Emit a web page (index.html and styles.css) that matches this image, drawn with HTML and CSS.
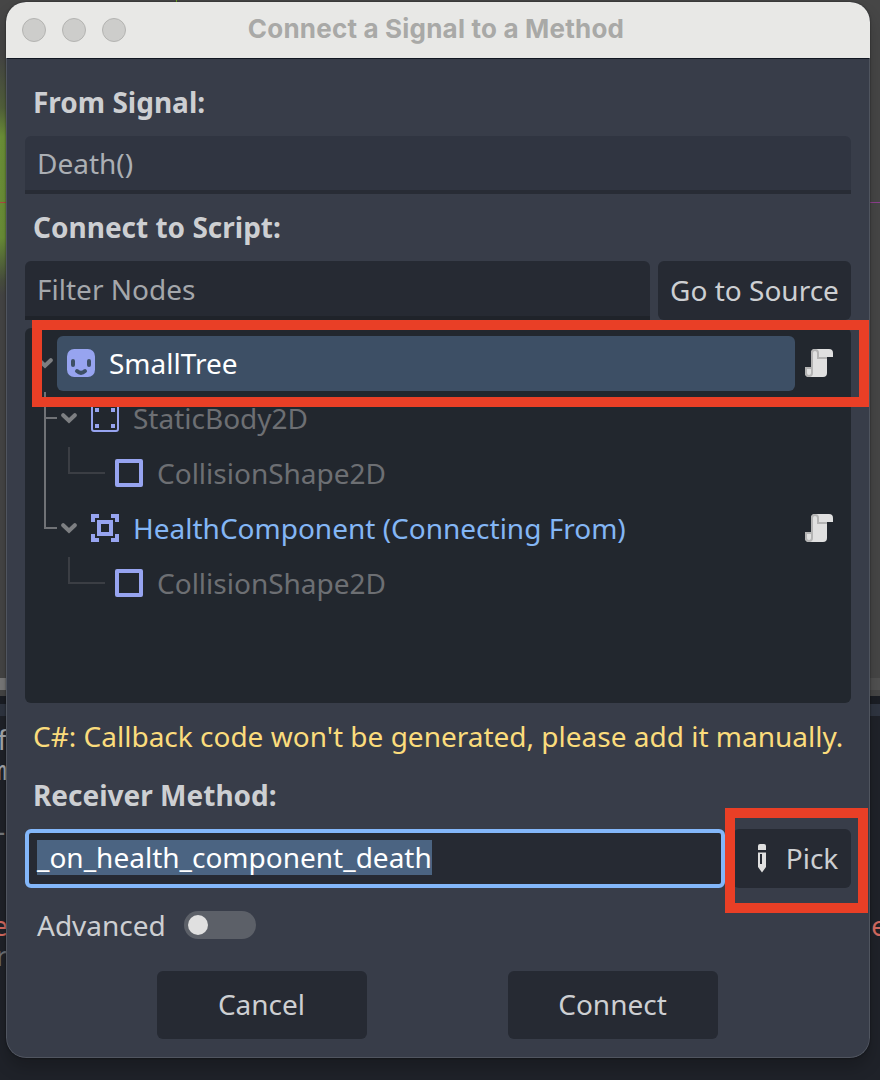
FILE: index.html
```html
<!DOCTYPE html>
<html lang="en">
<head>
<meta charset="utf-8">
<title>Connect a Signal to a Method</title>
<link rel="stylesheet" href="styles.css">
</head>
<body>
<svg class="defs" width="0" height="0">
  <symbol id="script" viewBox="0 0 16 16"><path fill="#e0e0e0" d="M6 1h7a2 2 0 0 1 2 2v2h-3v8a2 2 0 0 1-2 2H3a2 2 0 0 1-2-2v-3h3V3a2 2 0 0 1 2-2z"/><path fill="#b4b4b4" fill-rule="evenodd" d="M6 1a2 2 0 0 0-2 2v7H1v3a2 2 0 0 0 4 0V3a1 1 0 0 1 2 0v3h5V5H8V3a2 2 0 0 0-2-2zM2 11h2v2a1 1 0 0 1-2 0z"/></symbol>
  <symbol id="shape" viewBox="0 0 16 16"><rect x="2" y="2" width="12" height="12" fill="none" stroke="#97a4f0" stroke-width="2" stroke-linejoin="round"/></symbol>
  <symbol id="chevron" viewBox="0 0 16 12"><path d="M2.2 3.2 8 8.8l5.800-5.600" fill="none" stroke="#7d7f82" stroke-width="4" stroke-linecap="round"/></symbol>
</svg>
<div class="editor">
  <div class="viewport"><div class="foliage"></div><div class="axis"></div><div class="scrollbar"></div></div>
  <div class="split"></div>
  <div class="panel"></div>
  <span class="peek peek-f">f</span>
  <span class="peek peek-m">m</span>
  <span class="peek peek-dash">-</span>
  <span class="peek peek-e">e</span>
  <span class="peek peek-r">r</span>
  <span class="peek peek-right">e</span>
</div>
<main class="dialog">
  <header class="titlebar">
    <div class="lights"><i></i><i></i><i></i></div>
    <h1>Connect a Signal to a Method</h1>
  </header>
  <div class="content">
    <h2 class="label label-signal">From Signal:</h2>
    <div class="field readonly">Death()</div>
    <h2 class="label label-script">Connect to Script:</h2>
    <div class="row">
      <div class="field filter">Filter Nodes</div>
      <div class="button source">Go to Source</div>
    </div>
    <div class="tree">
      <svg class="guides" width="90" height="260" viewBox="0 0 90 260" fill="none" stroke-width="2">
        <path stroke="#707276" d="M20 64v136h12M20 90h12"/>
        <path stroke="#3b3e44" d="M44 119v26h36M44 229v26h36"/>
      </svg>
      <div class="node level0">
        <svg class="chevron"><use href="#chevron"/></svg>
        <div class="selected">
          <svg class="icon" viewBox="0 0 16 16"><rect x="1" y="1" width="14" height="14" rx="3.600" fill="#97a4f0"/><path d="M4 7v2M12 7v2M6 12q2 1.800 4 0" fill="none" stroke="#3d4f65" stroke-width="2" stroke-linecap="round"/></svg>
          <span>SmallTree</span>
        </div>
        <svg class="icon script"><use href="#script"/></svg>
      </div>
      <div class="node level1 dim">
        <svg class="chevron"><use href="#chevron"/></svg>
        <svg class="icon" viewBox="0 0 16 16" fill="#97a4f0"><rect x="1.500" y="1.500" width="13" height="13" rx="1" fill="none" stroke="#97a4f0"/><path d="M3 3h2v2H3zM11 3h2v2h-2zM3 11h2v2H3zM11 11h2v2h-2z"/></svg>
        <span>StaticBody2D</span>
      </div>
      <div class="node level2 dim">
        <svg class="icon"><use href="#shape"/></svg>
        <span>CollisionShape2D</span>
      </div>
      <div class="node level1 origin">
        <svg class="chevron"><use href="#chevron"/></svg>
        <svg class="icon" viewBox="0 0 16 16" fill="#97a4f0"><path d="M1 1h4v2H3v2H1zM11 1h4v4h-2V3h-2zM1 11h2v2h2v2H1zM13 11h2v4h-4v-2h2z"/><path fill-rule="evenodd" d="M4 4h8v8H4zM6 6v4h4V6z"/></svg>
        <span>HealthComponent (Connecting From)</span>
        <svg class="icon script"><use href="#script"/></svg>
      </div>
      <div class="node level2 dim">
        <svg class="icon"><use href="#shape"/></svg>
        <span>CollisionShape2D</span>
      </div>
    </div>
    <p class="warning">C#: Callback code won't be generated, please add it manually.</p>
    <h2 class="label label-method">Receiver Method:</h2>
    <div class="row">
      <div class="field method"><span class="selection">_on_health_component_death</span></div>
      <div class="button pick">
        <svg class="icon" viewBox="0 0 16 16" fill="#e0e0e0"><path d="M6 4V2a1 1 0 0 1 1-1h2a1 1 0 0 1 1 1v2z"/><path fill-rule="evenodd" d="M6 5.300h4V12.500L8 15.200 6 12.500zM7 6v5h1V6z"/></svg>
        <span>Pick</span>
      </div>
    </div>
    <div class="advanced"><span>Advanced</span><div class="toggle"><i></i></div></div>
    <div class="actions">
      <div class="button">Cancel</div>
      <div class="button">Connect</div>
    </div>
  </div>
</main>
<div class="highlight highlight-node"></div>
<div class="highlight highlight-pick"></div>
</body>
</html>
```
FILE: styles.css
```css
* { box-sizing: border-box; }
body {
  margin: 0;
  width: 880px;
  height: 1080px;
  position: relative;
  overflow: hidden;
  padding: 2px 10px 22px 6px;
  font: 28px/38px "Noto Sans", sans-serif;
  color: #cdcfd2;
  white-space: nowrap;
}
h1, h2, p { margin: 0; }
svg { display: block; flex: none; }
.defs { position: absolute; }

/* Editor visible behind the dialog */
.editor { position: absolute; inset: 0; background: #1f2229; overflow: hidden; }
.viewport { height: 696px; background: #464646; position: relative; }
.foliage {
  position: absolute; left: 0; top: 55px; width: 12px; height: 240px;
  background: linear-gradient(#46464600, #54633c 22%, #6f9439 34%, #6c9138 76%, #4a5040 94%, #46464600);
}
.axis {
  position: absolute; left: 0; right: 0; top: 202px; height: 1px;
  background: linear-gradient(90deg, #b64a45 50%, #8f3f8f 50%);
}
.viewport::after { content: ""; position: absolute; left: 176px; top: 0; width: 1px; height: 2px; background: #6faa20; }
.scrollbar { position: absolute; left: 0; right: 0; top: 678px; height: 12px; background: linear-gradient(90deg, #7a7a7a 50%, #515151 50%); }
.split { height: 8px; background: #1b1e25; }
.panel { height: 12px; background: #2f3541; }
.peek { position: absolute; font: 27px/32px "Noto Sans Mono", "DejaVu Sans Mono", monospace; color: #a7a9ac; }
.peek-f { left: -6px; top: 724px; }
.peek-m { left: -9px; top: 754px; }
.peek-dash { left: -8px; top: 815px; color: #777a7e; }
.peek-e { left: -8px; top: 910px; color: #d66b61; }
.peek-r { left: -4px; top: 940px; color: #6f7277; font-family: "Noto Sans", sans-serif; }
.peek-right { left: 871px; top: 910px; color: #d66b61; }

.dialog {
  position: relative;
  height: 1056px;
  border-radius: 20px;
  overflow: hidden;
  background: #383d49;
}
.dialog::after {
  content: ""; position: absolute; inset: 56px 0 0; pointer-events: none;
  border: 1px solid #50555f; border-top: 0; border-radius: 0 0 20px 20px;
}
body::after {
  content: ""; position: absolute; left: 6px; top: 2px; width: 864px; height: 1056px;
  border-radius: 20px; box-shadow: 0 0 2px #0009, 0 10px 16px #0003; pointer-events: none;
}
.titlebar {
  height: 57px;
  display: flex;
  align-items: center;
  padding: 0 16px 1px;
  background: #e8e8e6;
  border-bottom: 1px solid #111722;
}
.lights { display: flex; gap: 16px; width: 104px; }
.lights i { width: 24px; height: 24px; border-radius: 50%; background: #cdcdcb; border: 1px solid #b3b3b1; }
.titlebar h1 {
  flex: 1; margin-right: 108px; text-align: center;
  font: 700 26px/34px Inter, sans-serif; letter-spacing: 0.2px; color: #a9a9a7; padding-bottom: 2px;
}
.content { padding: 24px 19px 19px; }
.label { font-size: 28px; line-height: 38px; font-weight: 700; padding-left: 8px; }
.label-signal { margin-bottom: 15px; }
.label-script { margin: 14px 0 15px; }
.label-method { margin: 21px 0 15px; }
.row { display: flex; gap: 8px; }
.field {
  height: 59px; padding: 9px 12px; color: #a4a7ab;
  background: #262a33; border-bottom: 4px solid #1f232a; border-radius: 6px 6px 0 0;
}
.readonly { height: 58px; padding-top: 8px; background: #303541; color: #abafb4; border-bottom-color: #282c35; }
.filter { width: 625px; }
.button {
  display: flex; align-items: center; justify-content: center;
  height: 59px; padding-bottom: 2px; border-radius: 6px; background: #262a33;
}
.source { width: 193px; }
.tree { position: relative; height: 375px; margin-top: 8px; padding: 8px 0; border-radius: 6px; background: #22272e; }
.guides { position: absolute; left: 0; top: 0; }
.node { position: relative; display: flex; align-items: center; height: 55px; padding-bottom: 1px; }
.node > span { margin-left: 12px; }
.level0 { padding-left: 12px; align-items: flex-start; }
.level0 .chevron { margin: 21px 4px 0 0; }
.level0 .script { margin-top: 11px; }
.level1 { padding-left: 36px; }
.level2 { padding-left: 88px; }
.dim { color: #6d6f73; }
.origin { color: #84b6f5; }
.chevron { width: 16px; height: 12px; margin-right: 12px; }
.icon { width: 32px; height: 32px; }
.selected {
  display: flex; align-items: center; gap: 12px;
  width: 738px; height: 55px; padding: 0 0 1px 8px;
  border-radius: 6px; background: #3d4f65; color: #fff;
}
.script { margin-left: auto; margin-right: 16px; }
.warning { margin-top: 14px; padding-left: 8px; color: #fbdc7c; }
.method { width: 700px; padding: 5px 8px; line-height: 38px; border: 4px solid #83b7fa; border-radius: 6px; color: #fff; }
.selection { display: inline-block; height: 35px; line-height: 35px; background: #4b6482; }
.pick { width: 118px; gap: 8px; }
.pick .icon { margin-top: 1px; }
.advanced { display: flex; align-items: center; gap: 18px; height: 38px; margin-top: 18px; padding-left: 12px; }
.toggle { width: 72px; height: 28px; padding: 4px; border-radius: 14px; background: #5c6068; }
.toggle i { display: block; width: 20px; height: 20px; border-radius: 50%; background: #e0e0e0; }
.actions { display: flex; gap: 141px; margin: 27px 0 0 132px; }
.actions .button { width: 210px; height: 68px; padding-right: 1px; }

/* Callout frames */
.highlight { position: absolute; border: 10px solid #e93f26; z-index: 2; }
.highlight-node { left: 32px; top: 320px; width: 837px; height: 87px; }
.highlight-pick { left: 725px; top: 808px; width: 143px; height: 105px; }
```
